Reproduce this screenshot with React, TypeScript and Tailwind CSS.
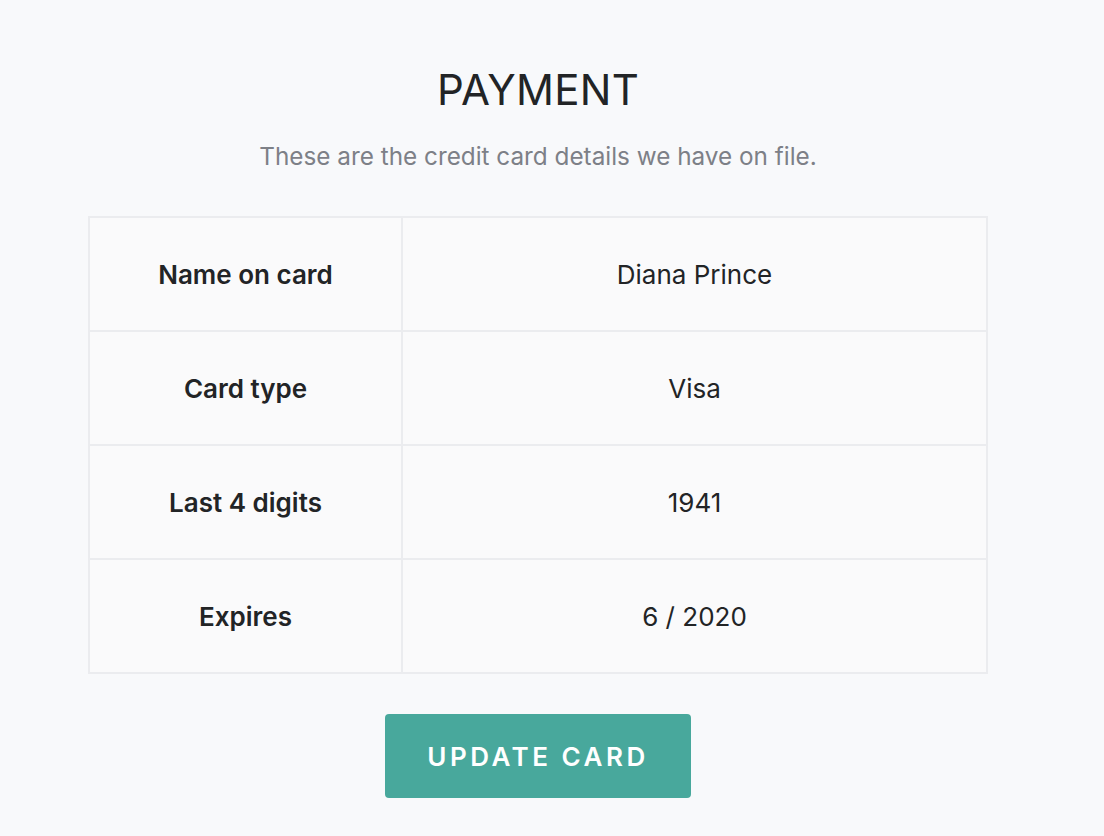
export default function App() {
  const rows = [
    { label: "Name on card", value: "Diana Prince" },
    { label: "Card type", value: "Visa" },
    { label: "Last 4 digits", value: "1941" },
    { label: "Expires", value: "6 / 2020" },
  ]

  return (
    <div
      className="min-h-screen bg-[#f8f9fb] text-[#222426] pt-[64px] pr-[28px] flex flex-col items-center"
      style={{ fontFamily: "Inter, 'Noto Sans', sans-serif" }}
    >
      <h1 className="text-[42px] leading-[52px] font-normal tracking-[0.3px]">PAYMENT</h1>
      <p className="mt-[24px] text-[24.3px] leading-[32px] text-[#7d8087]">
        These are the credit card details we have on file.
      </p>

      <div className="mt-[44px] w-[900px] border-x-2 border-b-2 border-[#ebecef] bg-[#fafafb]">
        {rows.map((r) => (
          <div
            key={r.label}
            className="grid grid-cols-[313px_1fr] h-[114px] border-t-2 border-[#ebecef]"
          >
            <div className="flex items-center justify-center border-r-2 border-[#ebecef] text-[26px] font-semibold">
              {r.label}
            </div>
            <div className="flex items-center justify-center text-[26px]">{r.value}</div>
          </div>
        ))}
      </div>

      <button className="mt-[40px] w-[306px] h-[84px] rounded-[4px] bg-[#48a89c] text-white text-[26px] font-semibold tracking-[3.5px]">
        UPDATE CARD
      </button>
    </div>
  )
}
